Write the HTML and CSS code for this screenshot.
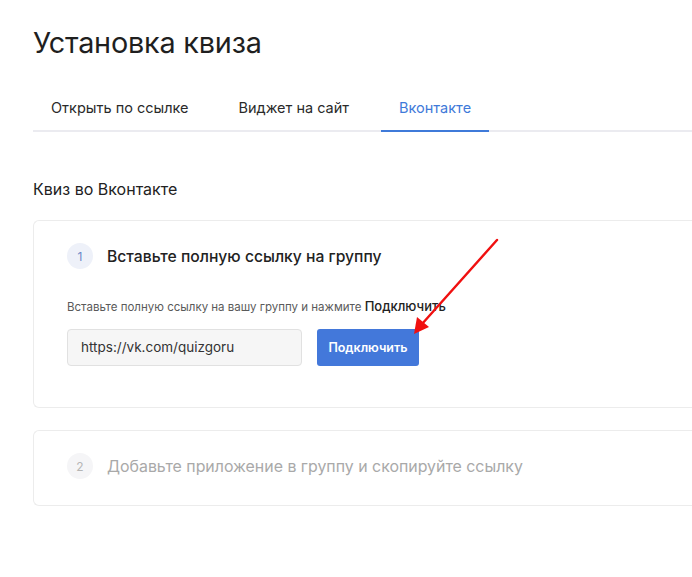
FILE: index.html
```html
<!DOCTYPE html>
<html lang="ru">
<head>
<meta charset="utf-8">
<link rel="stylesheet" href="styles.css">
</head>
<body>
<div class="page">
  <h1 class="title">Установка квиза</h1>
  <nav class="tabs">
    <div class="tab">Открыть по ссылке</div>
    <div class="tab">Виджет на сайт</div>
    <div class="tab active">Вконтакте</div>
  </nav>
  <h2 class="section">Квиз во Вконтакте</h2>
  <div class="card">
    <div class="step-head">
      <span class="num">1</span>
      <span class="step-title">Вставьте полную ссылку на группу</span>
    </div>
    <p class="hint">Вставьте полную ссылку на вашу группу и нажмите <b>Подключить</b></p>
    <div class="form">
      <div class="input">https://vk.com/quizgoru</div>
      <button class="btn">Подключить</button>
    </div>
  </div>
  <div class="card card-off">
    <div class="step-head">
      <span class="num">2</span>
      <span class="step-title">Добавьте приложение в группу и скопируйте ссылку</span>
    </div>
  </div>
</div>
<svg class="arrow" width="692" height="577" viewBox="0 0 692 577">
  <line x1="497" y1="240" x2="422" y2="324" stroke="#f01010" stroke-width="2.4" stroke-linecap="round"/>
  <polygon points="414,334 417,317 429,327" fill="#f01010"/>
</svg>
</body>
</html>
```
FILE: styles.css
```css
html, body {
  margin: 0;
  padding: 0;
  background: #fff;
  overflow: hidden;
}
body {
  font-family: Inter, "Noto Sans", sans-serif;
  color: #222;
  width: 692px;
  height: 577px;
  position: relative;
}
.page {
  padding: 26px 0 0 33px;
}
.title {
  margin: 0;
  font-size: 28.8px;
  font-weight: 400;
  line-height: 34px;
  color: #1f1f1f;
  letter-spacing: -0.2px;
}
.tabs {
  display: flex;
  gap: 14px;
  margin-top: 32px;
  border-bottom: 2px solid #ebebf0;
}
.tab {
  padding: 0 18px;
  height: 40px;
  line-height: 32px;
  font-size: 14.5px;
  color: #2a2a2a;
  margin-bottom: -2px;
  border-bottom: 2px solid transparent;
  box-sizing: border-box;
}
.tab.active {
  color: #3f7ad9;
  border-bottom-color: #3f7ad9;
}
.section {
  margin: 47px 0 0;
  font-size: 16px;
  font-weight: 400;
  line-height: 20px;
  color: #222;
}
.card {
  margin-top: 21px;
  border: 1px solid #ececec;
  border-right: none;
  border-radius: 6px 0 0 6px;
  padding: 22px 0 41px 33px;
  box-sizing: border-box;
}
.card-off {
  margin-top: 22px;
  padding: 22px 0 26px 33px;
}
.step-head {
  display: flex;
  align-items: center;
  gap: 14px;
}
.num {
  width: 26px;
  height: 26px;
  border-radius: 50%;
  background: #eef1f9;
  color: #6b86c7;
  font-size: 12px;
  display: flex;
  align-items: center;
  justify-content: center;
}
.step-title {
  font-size: 15.7px;
  font-weight: 500;
  color: #222;
}
.card-off .num {
  background: #f5f5f7;
  color: #b5b5b5;
}
.card-off .step-title {
  color: #a9a9a9;
  font-weight: 400;
  font-size: 15.9px;
}
.hint {
  margin: 29px 0 0;
  font-size: 11.5px;
  color: #5a5a5a;
  line-height: 16px;
}
.hint b {
  font-weight: 500;
  font-size: 13px;
  color: #222;
}
.form {
  display: flex;
  gap: 15px;
  margin-top: 14px;
}
.input {
  width: 235px;
  height: 37px;
  box-sizing: border-box;
  background: #f6f6f6;
  border: 1px solid #e1e1e1;
  border-radius: 4px;
  padding: 0 13px;
  line-height: 35px;
  font-size: 13.5px;
  color: #333;
}
.btn {
  width: 102px;
  height: 37px;
  border: none;
  border-radius: 3px;
  background: #4378da;
  color: #fff;
  font-family: Inter, "Noto Sans", sans-serif;
  font-size: 12.5px;
  font-weight: 600;
  padding: 0;
}
.arrow {
  position: absolute;
  left: 0;
  top: 0;
  pointer-events: none;
}
```
